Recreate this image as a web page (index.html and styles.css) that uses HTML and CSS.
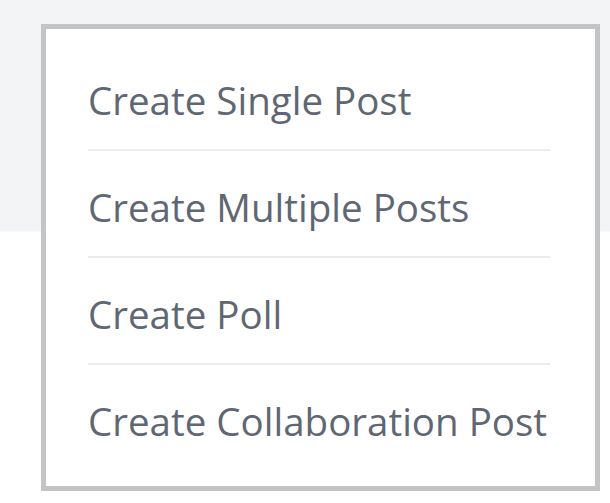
FILE: index.html
```html
<!DOCTYPE html>
<html>
<head>
<meta charset="utf-8">
<link rel="stylesheet" href="styles.css">
</head>
<body>
<div class="page">
  <ul class="menu">
    <li class="menu-item">Create Single Post</li>
    <li class="menu-item">Create Multiple Posts</li>
    <li class="menu-item">Create Poll</li>
    <li class="menu-item">Create Collaboration Post</li>
  </ul>
</div>
</body>
</html>
```

FILE: styles.css
```css
html, body {
  margin: 0;
  padding: 0;
}
body {
  width: 610px;
  height: 503px;
  overflow: hidden;
  background: linear-gradient(#f3f4f6 0, #f3f4f6 231px, #ffffff 232px);
  font-family: "Open Sans", "Liberation Sans", sans-serif;
}
.page {
  padding: 24px 10px 0 41px;
}
.menu {
  list-style: none;
  margin: 0;
  box-sizing: content-box;
  padding: 15px 45px 16px 42px;
  width: 462px;
  background: #ffffff;
  border: 5px solid #c3c4c6;
}
.menu-item {
  font-size: 38.5px;
  line-height: 46px;
  color: #5f6773;
  padding: 33px 0 26px;
  border-bottom: 2px solid #ececee;
  white-space: nowrap;
}
.menu-item:last-child {
  border-bottom: none;
}
```
